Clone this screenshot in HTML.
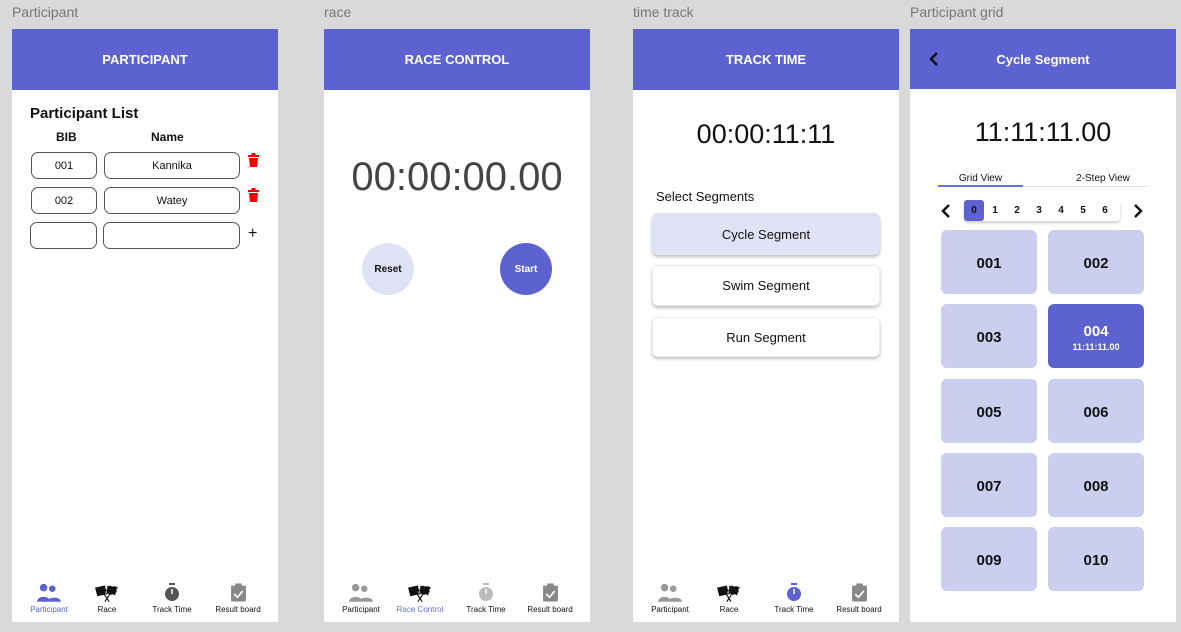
<!DOCTYPE html>
<html><head><meta charset="utf-8"><style>
*{margin:0;padding:0;box-sizing:border-box}
body{width:1181px;height:632px;background:#d9d9d9;position:relative;overflow:hidden;font-family:"Liberation Sans",sans-serif;color:#111}
.a{position:absolute}
.lbl{font-size:14px;color:#777;top:4px}
.fr{position:absolute;top:29px;width:266px;height:593px;background:#fff}
.hd{position:absolute;left:0;top:0;width:266px;height:61px;background:#5c63d1;color:#fff;font-weight:bold;font-size:13px;display:flex;align-items:center;justify-content:center}
.inp{position:absolute;border:1px solid #555;border-radius:7px;height:27px;font-size:11px;display:flex;align-items:center;justify-content:center}
.nav{position:absolute;top:554px;width:266px;height:35px}
.ni{position:absolute;font-size:8px;text-align:center;width:70px}
.ic{display:block;margin:0 auto 3px;height:19px}
.btn{position:absolute;left:19px;width:228px;border-radius:6px;box-shadow:0 2px 3px rgba(0,0,0,.25);font-size:13px;display:flex;align-items:center;justify-content:center;background:#fff;border:1px solid #eee}
.t{position:absolute;width:96px;height:64px;background:#ccceef;border-radius:6px;font-weight:bold;font-size:15px;display:flex;align-items:center;justify-content:center;flex-direction:column;padding-top:3px}
</style></head><body>
<div class="a lbl" style="left:12px">Participant</div>
<div class="a lbl" style="left:324px">race</div>
<div class="a lbl" style="left:633px">time track</div>
<div class="a lbl" style="left:910px">Participant grid</div>

<!-- frame1 -->
<div class="fr" style="left:12px">
<div class="hd">PARTICIPANT</div>
<div class="a" style="left:18px;top:76px;font-size:15px;font-weight:bold">Participant List</div>
<div class="a" style="left:44px;top:101px;font-size:12px;font-weight:bold">BIB</div>
<div class="a" style="left:139px;top:101px;font-size:12px;font-weight:bold">Name</div>
<div class="inp" style="left:19px;top:123px;width:66px">001</div>
<div class="inp" style="left:92px;top:123px;width:136px">Kannika</div>
<div class="inp" style="left:19px;top:158px;width:66px">002</div>
<div class="inp" style="left:92px;top:158px;width:136px">Watey</div>
<div class="inp" style="left:18px;top:193px;width:67px"></div>
<div class="inp" style="left:91px;top:193px;width:137px"></div>
<svg class="a" style="left:236px;top:124px" width="11" height="14" viewBox="0 0 11 14"><rect x="0" y="2" width="11" height="2" fill="#e00"/><rect x="3.5" y="0" width="4" height="2" fill="#e00"/><path d="M1 5h9l-1 9H2z" fill="#e00"/></svg>
<svg class="a" style="left:236px;top:159px" width="11" height="14" viewBox="0 0 11 14"><rect x="0" y="2" width="11" height="2" fill="#e00"/><rect x="3.5" y="0" width="4" height="2" fill="#e00"/><path d="M1 5h9l-1 9H2z" fill="#e00"/></svg>
<div class="a" style="left:236px;top:196px;font-size:16px">+</div>
<div class="nav">
<div class="ni" style="left:2px;color:#5c63d1"><svg class="ic" width="26" height="19" viewBox="0 0 24 17"><circle cx="7" cy="4" r="3.5" fill="#5c63d1"/><circle cx="15" cy="5" r="3" fill="#5c63d1"/><path d="M1 17c0-6 12-6 12 0zM10 17c1-5 13-5 13 0z" fill="#5c63d1"/></svg>Participant</div>
<div class="ni" style="left:60px"><svg class="ic" width="26" height="19" viewBox="0 0 24 17"><path d="M1 4l9-2 2 8-9 2z" fill="#111"/><path d="M12 2l10 1-2 8-9-1z" fill="#111" stroke="#fff" stroke-dasharray="2 2"/><path d="M8 8l6 9M16 8l-6 9" stroke="#111"/></svg>Race</div>
<div class="ni" style="left:125px"><svg class="ic" width="16" height="19" viewBox="0 0 16 19"><rect x="5" y="0" width="6" height="2" fill="#555"/><circle cx="8" cy="11" r="7" fill="#555"/><rect x="7.3" y="6" width="1.5" height="5" fill="#fff"/></svg>Track Time</div>
<div class="ni" style="left:191px"><svg class="ic" width="17" height="19" viewBox="0 0 16 17"><rect x="1" y="2" width="14" height="15" rx="1" fill="#888"/><rect x="5" y="0" width="6" height="3" fill="#888"/><path d="M4 10l3 3 5-6" stroke="#fff" stroke-width="1.6" fill="none"/></svg>Result board</div>
</div>
</div>

<!-- frame2 -->
<div class="fr" style="left:324px">
<div class="hd">RACE CONTROL</div>
<div class="a" style="left:0;width:266px;top:126px;text-align:center;font-size:40px;color:#444">00:00:00.00</div>
<div class="a" style="left:38px;top:214px;width:52px;height:52px;border-radius:50%;background:#e0e1f5;font-size:10px;font-weight:bold;display:flex;align-items:center;justify-content:center">Reset</div>
<div class="a" style="left:176px;top:214px;width:52px;height:52px;border-radius:50%;background:#5c63d1;color:#fff;font-size:10px;font-weight:bold;display:flex;align-items:center;justify-content:center">Start</div>
<div class="nav">
<div class="ni" style="left:2px"><svg class="ic" width="26" height="19" viewBox="0 0 24 17"><circle cx="7" cy="4" r="3.5" fill="#999"/><circle cx="15" cy="5" r="3" fill="#999"/><path d="M1 17c0-6 12-6 12 0zM10 17c1-5 13-5 13 0z" fill="#999"/></svg>Participant</div>
<div class="ni" style="left:61px;color:#6a70dd"><svg class="ic" width="26" height="19" viewBox="0 0 24 17"><path d="M1 4l9-2 2 8-9 2z" fill="#111"/><path d="M12 2l10 1-2 8-9-1z" fill="#111" stroke="#fff" stroke-dasharray="2 2"/><path d="M8 8l6 9M16 8l-6 9" stroke="#111"/></svg>Race Control</div>
<div class="ni" style="left:127px"><svg class="ic" width="16" height="19" viewBox="0 0 16 19"><rect x="5" y="0" width="6" height="2" fill="#bbb"/><circle cx="8" cy="11" r="7" fill="#bbb"/><rect x="7.3" y="6" width="1.5" height="5" fill="#fff"/></svg>Track Time</div>
<div class="ni" style="left:191px"><svg class="ic" width="17" height="19" viewBox="0 0 16 17"><rect x="1" y="2" width="14" height="15" rx="1" fill="#888"/><rect x="5" y="0" width="6" height="3" fill="#888"/><path d="M4 10l3 3 5-6" stroke="#fff" stroke-width="1.6" fill="none"/></svg>Result board</div>
</div>
</div>

<!-- frame3 -->
<div class="fr" style="left:633px">
<div class="hd">TRACK TIME</div>
<div class="a" style="left:0;width:266px;top:90px;text-align:center;font-size:27px">00:00:11:11</div>
<div class="a" style="left:23px;top:160px;font-size:13px">Select Segments</div>
<div class="btn" style="top:184px;height:42px;background:#e1e2f6;border-color:#e1e2f6">Cycle Segment</div>
<div class="btn" style="top:236px;height:41px">Swim Segment</div>
<div class="btn" style="top:288px;height:40px">Run Segment</div>
<div class="nav">
<div class="ni" style="left:2px"><svg class="ic" width="26" height="19" viewBox="0 0 24 17"><circle cx="7" cy="4" r="3.5" fill="#999"/><circle cx="15" cy="5" r="3" fill="#999"/><path d="M1 17c0-6 12-6 12 0zM10 17c1-5 13-5 13 0z" fill="#999"/></svg>Participant</div>
<div class="ni" style="left:61px"><svg class="ic" width="26" height="19" viewBox="0 0 24 17"><path d="M1 4l9-2 2 8-9 2z" fill="#111"/><path d="M12 2l10 1-2 8-9-1z" fill="#111" stroke="#fff" stroke-dasharray="2 2"/><path d="M8 8l6 9M16 8l-6 9" stroke="#111"/></svg>Race</div>
<div class="ni" style="left:126px"><svg class="ic" width="16" height="19" viewBox="0 0 16 19"><rect x="5" y="0" width="6" height="2" fill="#5c63d1"/><circle cx="8" cy="11" r="7" fill="#5c63d1"/><rect x="7.3" y="6" width="1.5" height="5" fill="#fff"/></svg>Track Time</div>
<div class="ni" style="left:191px"><svg class="ic" width="17" height="19" viewBox="0 0 16 17"><rect x="1" y="2" width="14" height="15" rx="1" fill="#888"/><rect x="5" y="0" width="6" height="3" fill="#888"/><path d="M4 10l3 3 5-6" stroke="#fff" stroke-width="1.6" fill="none"/></svg>Result board</div>
</div>
</div>

<!-- frame4 -->
<div class="fr" style="left:910px;height:593px">
<div class="hd" style="height:60px">Cycle Segment</div>
<svg class="a" style="left:18px;top:23px" width="12" height="14" viewBox="0 0 12 14"><path d="M9 1L3 7l6 6" stroke="#111" stroke-width="2.5" fill="none"/></svg>
<div class="a" style="left:0;width:266px;top:88px;text-align:center;font-size:27px">11:11:11.00</div>
<div class="a" style="left:28px;top:144px;width:85px;text-align:center;font-size:10px">Grid View</div>
<div class="a" style="left:138px;top:144px;width:110px;text-align:center;font-size:10px">2-Step View</div>
<div class="a" style="left:28px;top:157px;width:210px;height:1px;background:#e4e4e4"></div>
<div class="a" style="left:28px;top:156px;width:85px;height:2px;background:#6a70dd"></div>
<svg class="a" style="left:31px;top:175px" width="10" height="14" viewBox="0 0 10 14"><path d="M8 1L2 7l6 6" stroke="#111" stroke-width="2.5" fill="none"/></svg>
<svg class="a" style="left:223px;top:175px" width="10" height="14" viewBox="0 0 10 14"><path d="M2 1l6 6-6 6" stroke="#111" stroke-width="2.5" fill="none"/></svg>
<div class="a" style="left:54px;top:171px;width:156px;height:21px;box-shadow:0 2px 3px rgba(0,0,0,.2);background:#fff;border-radius:3px"></div>
<div class="a" style="left:54px;top:171px;width:20px;height:21px;background:#5c63d1;border-radius:3px"></div>
<div class="a" style="left:54px;top:176px;font-size:10px;font-weight:bold;display:flex"><span style="width:20px;text-align:center">0</span><span style="width:22px;text-align:center">1</span><span style="width:22px;text-align:center">2</span><span style="width:22px;text-align:center">3</span><span style="width:22px;text-align:center">4</span><span style="width:22px;text-align:center">5</span><span style="width:22px;text-align:center">6</span></div>
<div class="t" style="left:31px;top:201px">001</div>
<div class="t" style="left:138px;top:201px">002</div>
<div class="t" style="left:31px;top:275px">003</div>
<div class="t" style="left:138px;top:275px;background:#5c63d1;color:#fff">004<span style="font-size:9px;margin-top:2px">11:11:11.00</span></div>
<div class="t" style="left:31px;top:350px">005</div>
<div class="t" style="left:138px;top:350px">006</div>
<div class="t" style="left:31px;top:424px">007</div>
<div class="t" style="left:138px;top:424px">008</div>
<div class="t" style="left:31px;top:498px">009</div>
<div class="t" style="left:138px;top:498px">010</div>
</div>
</body></html>
